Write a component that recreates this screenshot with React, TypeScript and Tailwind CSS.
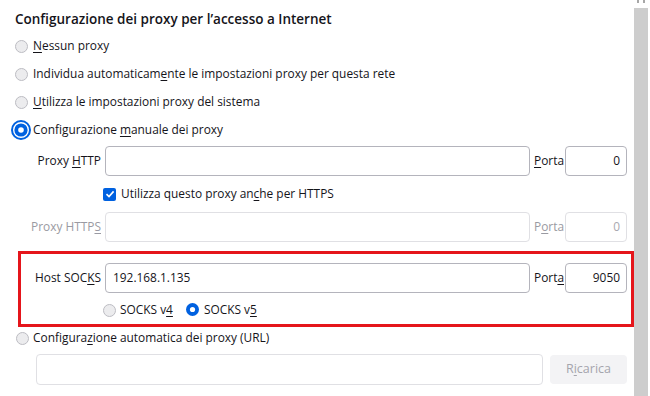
import type { ReactNode } from "react";

const BLUE = "#0061e0";

function RadioOff() {
  return (
    <svg width="13" height="13" viewBox="0 0 13 13" className="shrink-0">
      <circle cx="6.5" cy="6.5" r="6" fill="#ececee" stroke="#bcbcc2" />
    </svg>
  );
}

function RadioOn() {
  return (
    <svg width="13" height="13" viewBox="0 0 13 13" className="shrink-0">
      <circle cx="6.5" cy="6.5" r="6.5" fill={BLUE} />
      <circle cx="6.5" cy="6.5" r="2.6" fill="#fff" />
    </svg>
  );
}

function RadioFocused() {
  return (
    <svg width="20" height="20" viewBox="0 0 20 20" className="shrink-0">
      <circle cx="10" cy="10" r="9" fill="none" stroke={BLUE} strokeWidth="2" />
      <circle cx="10" cy="10" r="6.6" fill={BLUE} />
      <circle cx="10" cy="10" r="2.8" fill="#fff" />
    </svg>
  );
}

function Key({ children }: { children: ReactNode }) {
  return <span className="underline underline-offset-2">{children}</span>;
}

function Choice({ icon, children }: { icon: ReactNode; children: ReactNode }) {
  return (
    <div className="flex h-[28px] items-center">
      <div className="flex w-[20px] justify-center">{icon}</div>
      <span className="ml-[2px]">{children}</span>
    </div>
  );
}

function Field({
  value,
  disabled,
  right,
  className = "",
}: {
  value?: string;
  disabled?: boolean;
  right?: boolean;
  className?: string;
}) {
  return (
    <div
      className={`flex h-[30px] items-center rounded-[4px] border bg-white ${
        disabled ? "border-[#e0e0e4] text-[#a8a8b0]" : "border-[#b4b4bc]"
      } ${right ? "justify-end pr-[6px]" : "pl-[7px]"} ${className}`}
    >
      {value}
    </div>
  );
}

function ProxyRow({
  label,
  host,
  port,
  disabled,
  portLabel,
  labelWidth = "w-[105px]",
}: {
  label: ReactNode;
  host?: string;
  port: string;
  disabled?: boolean;
  portLabel: ReactNode;
  labelWidth?: string;
}) {
  return (
    <div className={`flex items-center ${disabled ? "text-[#9a9aa2]" : ""}`}>
      <div className={`${labelWidth} shrink-0 pr-[4px] text-right`}>{label}</div>
      <Field value={host} disabled={disabled} className="flex-1" />
      <div className="w-[35px] shrink-0 pl-[4px]">{portLabel}</div>
      <Field value={port} disabled={disabled} right className="w-[62px] shrink-0" />
    </div>
  );
}

export default function App() {
  return (
    <div className="flex h-[396px] w-[650px] overflow-hidden bg-white font-['Open_Sans',sans-serif] text-[11.9px] text-[#15141a]">
      <div className="w-[634px] shrink-0 pt-[9px]">
        <h1 className="pl-[15px] text-[13.5px] leading-[20px] font-semibold">
          Configurazione dei proxy per l’accesso a Internet
        </h1>

        <div className="mt-[3px] pl-[11px]">
          <Choice icon={<RadioOff />}>
            <Key>N</Key>essun proxy
          </Choice>
          <Choice icon={<RadioOff />}>
            Individua automaticam<Key>e</Key>nte le impostazioni proxy per questa rete
          </Choice>
          <Choice icon={<RadioOff />}>
            <Key>U</Key>tilizza le impostazioni proxy del sistema
          </Choice>
          <Choice icon={<RadioFocused />}>
            Configurazione <Key>m</Key>anuale dei proxy
          </Choice>
        </div>

        <div className="mt-[2px] pr-[7px]">
          <ProxyRow
            label={
              <>
                Proxy <Key>H</Key>TTP
              </>
            }
            port="0"
            portLabel={
              <>
                <Key>P</Key>orta
              </>
            }
          />

          <div className="flex h-[36px] items-center pl-[103px]">
            <span className="flex h-[13px] w-[13px] items-center justify-center rounded-[2px] bg-[#0061e0]">
              <svg width="10" height="10" viewBox="0 0 10 10">
                <path d="M1.5 5.2 L4 7.6 L8.6 2.4" fill="none" stroke="#fff" strokeWidth="1.6" />
              </svg>
            </span>
            <span className="ml-[5px]">
              Utilizza questo proxy an<Key>c</Key>he per HTTPS
            </span>
          </div>

          <ProxyRow
            disabled
            label={
              <>
                Proxy HTTP<Key>S</Key>
              </>
            }
            port="0"
            portLabel={
              <>
                P<Key>o</Key>rta
              </>
            }
          />
        </div>

        <div className="mt-[9px] ml-[18px] border-[3px] border-[#e5151b] pt-[9px] pr-[4px]">
          <ProxyRow
            labelWidth="w-[84px]"
            label={
              <>
                Host SOC<Key>K</Key>S
              </>
            }
            host="192.168.1.135"
            port="9050"
            portLabel={
              <>
                Port<Key>a</Key>
              </>
            }
          />
          <div className="mt-[3px] flex h-[28px] items-center pl-[82px]">
            <RadioOff />
            <span className="ml-[4px]">
              SOCKS v<Key>4</Key>
            </span>
            <span className="ml-[13px] flex items-center">
              <RadioOn />
              <span className="ml-[5px]">
                SOCKS v<Key>5</Key>
              </span>
            </span>
          </div>
        </div>

        <div className="flex h-[22px] items-center pl-[16px]">
          <RadioOff />
          <span className="ml-[4px]">
            Configura<Key>z</Key>ione automatica dei proxy (URL)
          </span>
        </div>

        <div className="mt-[5px] flex items-center pr-[7px] pl-[36px]">
          <div className="h-[31px] flex-1 rounded-[4px] border border-[#e0e0e4] bg-white" />
          <div className="ml-[7px] flex h-[29px] w-[77px] items-center justify-center rounded-[4px] bg-[#f3f3f5] text-[12.5px] text-[#a5a5ad]">
            R<Key>i</Key>carica
          </div>
        </div>
      </div>

      <div className="flex w-[14px] shrink-0 flex-col">
        <div className="flex h-[8px] items-start justify-center">
          <svg width="8" height="4" viewBox="0 0 8 4">
            <path d="M1 0 V3 M7 0 V3" stroke="#8a8a8a" strokeWidth="1.5" />
          </svg>
        </div>
        <div className="flex-1 bg-[#cdcdcd]" />
      </div>
    </div>
  );
}
